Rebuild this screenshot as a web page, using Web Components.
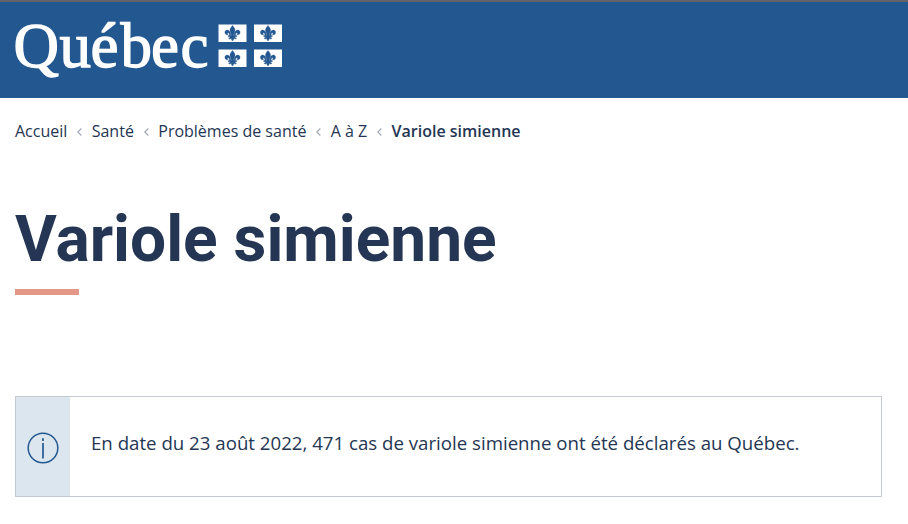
<!DOCTYPE html>
<html lang="fr">
<head>
<meta charset="utf-8">
<title>Variole simienne</title>
<style>
body{margin:0;background:#fff;color:#243653;font-family:"Open Sans","Noto Sans",sans-serif}
</style>
</head>
<body>
<qc-page>
<qc-header slot="header"></qc-header>
<qc-breadcrumb slot="nav"><qc-crumb>Accueil</qc-crumb><qc-crumb>Santé</qc-crumb><qc-crumb>Problèmes de santé</qc-crumb><qc-crumb>A à Z</qc-crumb><qc-crumb current>Variole simienne</qc-crumb></qc-breadcrumb>
<qc-title>Variole simienne</qc-title>
<qc-notice>En date du 23 août 2022, 471 cas de variole simienne ont été déclarés au Québec.</qc-notice>
</qc-page>
<script>
const define = (name, html) => customElements.define(name, class extends HTMLElement {
  constructor(){ super(); this.attachShadow({mode:'open'}).innerHTML = html; }
});
define('qc-page', `<style>
:host{display:block;height:524px;overflow:hidden}
main{padding:0 26px 0 15px}
</style><slot name="header"></slot><main><slot name="nav"></slot><slot></slot></main>`);

const lily = '<path d="M0-7.8C1.3-6 2.7-4.6 2.5-2.7C2.3-1 1.2.3 1.1 2.1H1.7C1.6-.2 3.1-3.2 5.3-3.2C7.4-3.2 8.2-.7 7 .8C6.2 1.8 4.8 1.7 4.4.9C5.5.7 5.3-.7 4.3-.5C3.2-.3 3 1 3.1 2.1H4.2V3.5H2.3C2.5 4.6 3.2 5 4 4.8C3.4 6.2 1.9 5.8 1.4 4.7C1.2 6 .8 6.8 0 7.8C-.8 6.8-1.2 6-1.4 4.7C-1.9 5.8-3.4 6.2-4 4.8C-3.2 5-2.5 4.6-2.3 3.5H-4.2V2.1H-3.1C-3 1-3.2-.3-4.3-.5C-5.3-.7-5.5.7-4.4.9C-4.8 1.7-6.2 1.8-7 .8C-8.2-.7-7.4-3.2-5.3-3.2C-3.1-3.2-1.6-.2-1.7 2.1H-1.1C-1.2.3-2.3-1-2.5-2.7C-2.7-4.6-1.3-6 0-7.8Z" fill="#235790" stroke="#235790" stroke-width=".4"/>';
const flag = (x,y) => `<rect x="${x}" y="${y}" width="28" height="17.5" fill="#fff"/><g transform="translate(${x+14} ${y+8.8})">${lily}</g>`;
define('qc-header', `<style>
:host{display:block;box-sizing:border-box;height:98px;border-top:2px solid #626366;background:#235790;padding:0 0 0 10px}
svg{display:block}
text{font-family:"Liberation Serif",serif;font-size:63px;fill:#fff;stroke:#fff;stroke-width:1.3px}
</style><svg width="280" height="92" viewBox="10 2 280 92" role="img" aria-label="Québec">
<text x="13.5 59.5 90.5 120.5 151 180.5" y="67">Québec</text>
${flag(218.5,24.5)}${flag(254,24.5)}${flag(218.5,49.5)}${flag(254,49.5)}
</svg>`);
define('qc-breadcrumb', `<style>
:host{display:flex;height:24px;margin-top:21px;font-size:16px;line-height:24px}
</style><slot></slot>`);
define('qc-crumb', `<style>
:host{display:flex;align-items:center;white-space:nowrap}
svg{width:5px;height:8px;margin:1px 9.7px 0 9.7px;fill:none;stroke:#a3a9b8;stroke-width:1.2}
:host([current]){font-weight:600}
:host([current]) svg{display:none}
</style><slot></slot><svg viewBox="0 0 5 8"><path d="M4.4.5L.8 4l3.6 3.5"/></svg>`);
define('qc-title', `<style>
:host{display:block;margin-top:59px}
h1{margin:0;font:700 64px/76px Roboto,sans-serif}
i{display:block;width:64px;height:6px;margin-top:11px;background:#e39887}
</style><h1><slot></slot></h1><i></i>`);
define('qc-notice', `<style>
:host{display:flex;box-sizing:border-box;height:101px;margin-top:101px;border:1px solid #c5cad2}
aside{width:54px;background:#dce6ee;display:flex;align-items:center;justify-content:center}
svg{width:32px;height:32px;margin-top:3px;fill:none;stroke:#235790}
p{margin:0;padding:32px 0 0 21px;font-size:18.67px;line-height:27px;white-space:nowrap}
</style><aside><svg viewBox="0 0 32 32"><circle cx="16" cy="16" r="14.8" stroke-width="1.5"/><path d="M16 6.3v2.8M16 11v15.5" stroke-width="1.7"/></svg></aside><p><slot></slot></p>`);
</script>
</body>
</html>
